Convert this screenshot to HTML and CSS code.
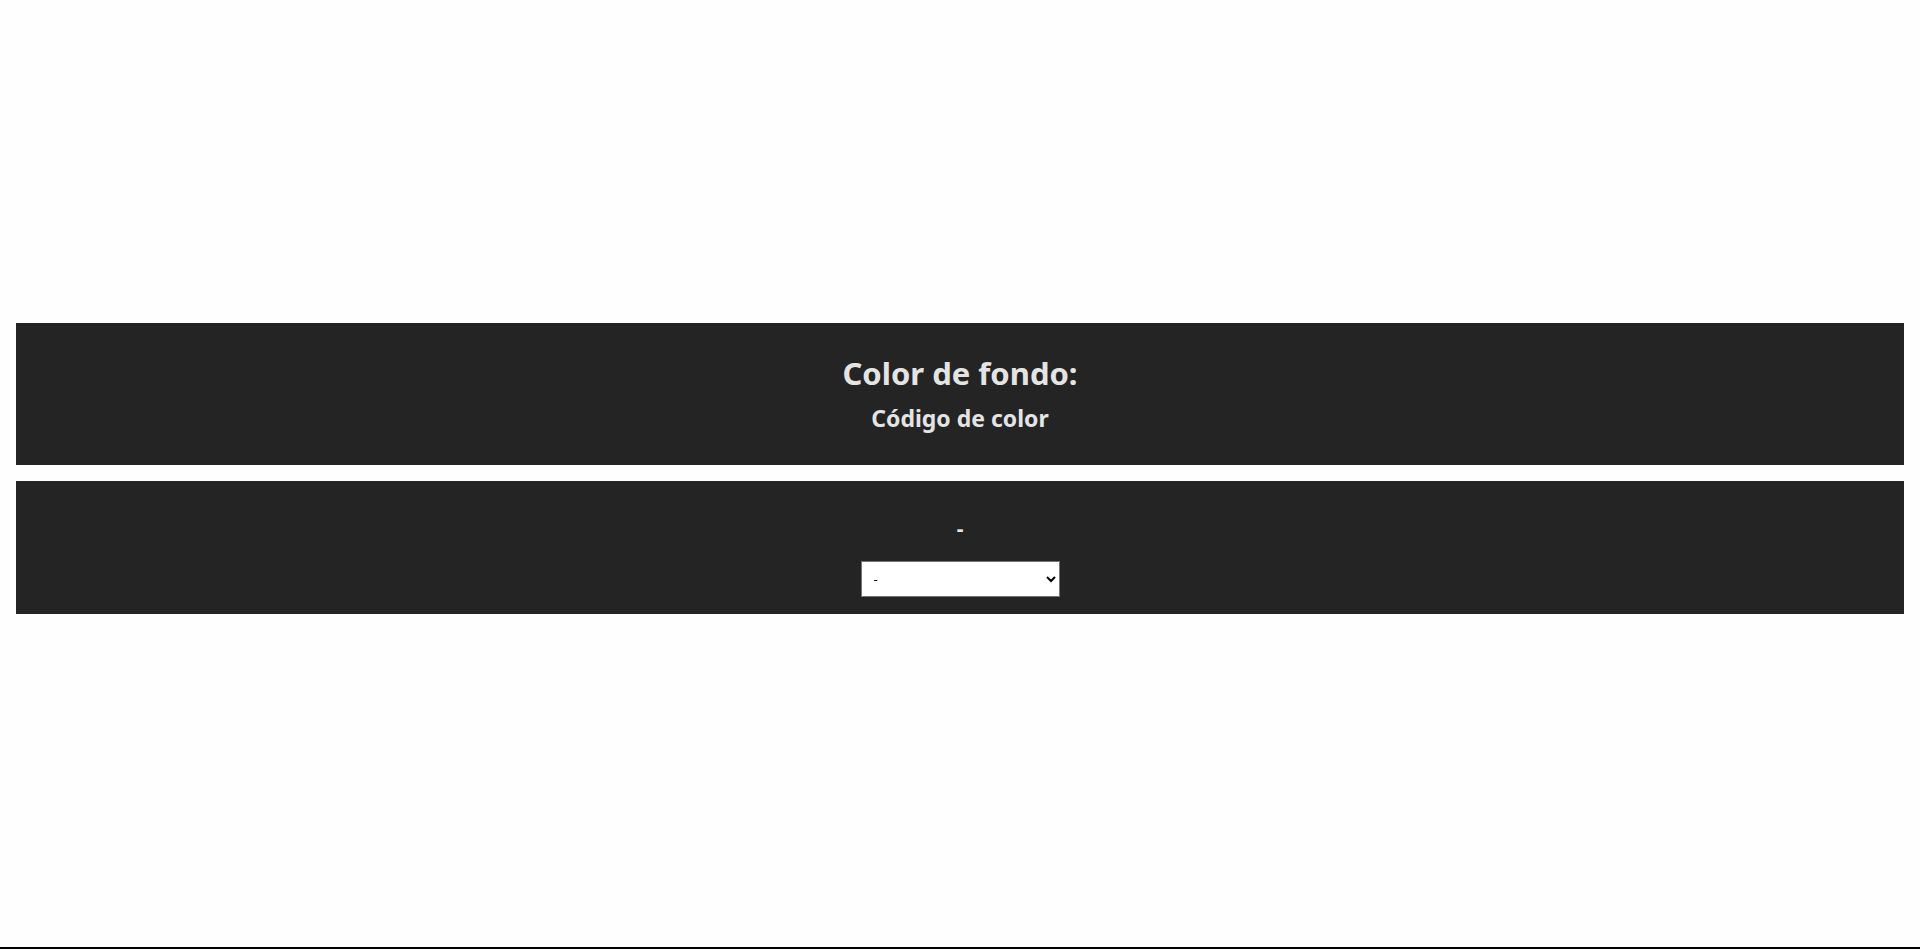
FILE: index.html
```html
<!DOCTYPE html>
<html lang="es">
<head>
<meta charset="utf-8">
<title>Color de fondo</title>
<link rel="stylesheet" href="styles.css">
</head>
<body>
<div class="page">
  <main class="content">
    <section class="panel panel-info">
      <h1 class="title">Color de fondo:</h1>
      <h2 class="subtitle">Código de color</h2>
    </section>
    <section class="panel panel-select">
      <p class="value">-</p>
      <select class="picker">
        <option>-</option>
      </select>
    </section>
  </main>
</div>
</body>
</html>
```
FILE: styles.css
```css
html, body {
  margin: 0;
  padding: 0;
  background: #fefefe;
}
.page {
  box-sizing: border-box;
  min-height: 100vh;
  border-bottom: 2px solid #000;
  padding: 323px 16px 0;
  font-family: "Noto Sans", "Open Sans", sans-serif;
}
.content {
  display: flex;
  flex-direction: column;
  gap: 16px;
}
.panel {
  background: #242424;
  color: #e4e4e4;
  display: flex;
  flex-direction: column;
  align-items: center;
}
.panel-info {
  height: 142px;
  box-sizing: border-box;
  padding-top: 30px;
}
.title {
  margin: 0;
  font-size: 31px;
  font-weight: 700;
  line-height: 40px;
}
.subtitle {
  margin: 10px 0 0;
  font-size: 23px;
  font-weight: 700;
  line-height: 30px;
}
.panel-select {
  height: 133px;
  box-sizing: border-box;
  padding-top: 32px;
}
.value {
  margin: 0;
  font-size: 21px;
  font-weight: 700;
  line-height: 30px;
}
.picker {
  margin-top: 18px;
  width: 199px;
  height: 36px;
  background: #fff;
  border: 1px solid #767676;
  border-radius: 0;
  font-family: "Noto Sans", sans-serif;
  font-size: 13px;
  padding: 0 8px;
  color: #000;
}
```
